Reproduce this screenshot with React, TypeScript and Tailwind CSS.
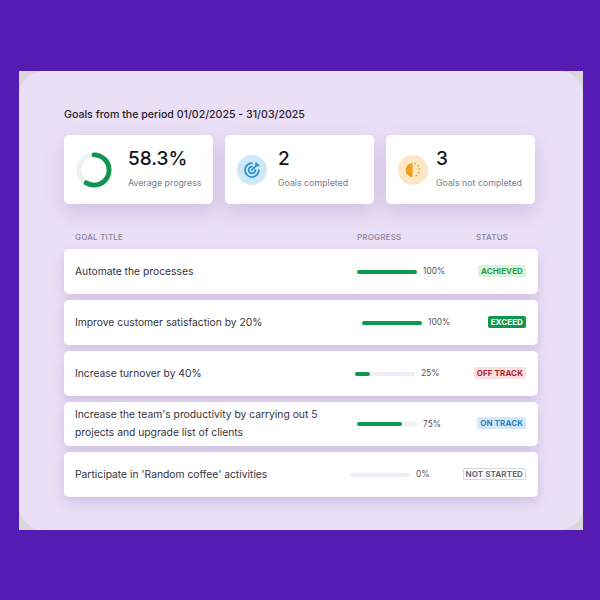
import React from "react";

function Ring() {
  const r = 15.5;
  const c = 2 * Math.PI * r;
  return (
    <svg width="36" height="36" viewBox="0 0 37 37" className="shrink-0">
      <circle cx="18.5" cy="18.5" r={r} fill="none" stroke="#eef0f4" strokeWidth="5" />
      <circle
        cx="18.5"
        cy="18.5"
        r={r}
        fill="none"
        stroke="#0f9650"
        strokeWidth="5"
        strokeLinecap="round"
        strokeDasharray={`${c * 0.583} ${c}`}
        transform="rotate(-90 18.5 18.5)"
      />
    </svg>
  );
}

function TargetIcon() {
  return (
    <div className="w-[30px] h-[30px] rounded-full bg-[#cfe8f8] flex items-center justify-center shrink-0">
      <svg width="18" height="18" viewBox="0 0 18 18" fill="none" stroke="#2b8fd3" strokeWidth="1.7" strokeLinecap="round">
        <path d="M9 2.2A6.9 6.9 0 1 0 15.8 9" />
        <path d="M9 5.6A3.4 3.4 0 1 0 12.4 9" />
        <path d="M8.8 9.2 14.6 3.4" />
        <path d="M13.2 2.2v2.2h2.4" />
      </svg>
    </div>
  );
}

function HalfIcon() {
  return (
    <div className="w-[30px] h-[30px] rounded-full bg-[#fbe6c6] flex items-center justify-center shrink-0">
      <svg width="18" height="18" viewBox="0 0 18 18" fill="none">
        <path d="M8.6 2A7 7 0 0 0 8.6 16Z" fill="#ee9f1c" />
        <path d="M10.6 2.4A7 7 0 0 1 10.6 15.6" stroke="#ee9f1c" strokeWidth="1.2" strokeDasharray="1 2.6" strokeLinecap="round" />
      </svg>
    </div>
  );
}

function StatCard({
  icon,
  value,
  label,
  gap,
}: {
  icon: React.ReactNode;
  value: string;
  label: string;
  gap: string;
}) {
  return (
    <div className={`w-[149px] h-[69px] bg-white rounded-[5px] shadow-[0_8px_20px_rgba(100,70,150,0.2)] flex items-center pl-3 ${gap}`}>
      {icon}
      <div className="flex flex-col pb-[2px]">
        <span className="text-[19px] leading-[22px] font-medium text-[#17151c]">{value}</span>
        <span className="text-[8.8px] leading-[12px] mt-[7px] text-[#7d7d88]">{label}</span>
      </div>
    </div>
  );
}

const rows = [
  { title: "Automate the processes", tw: "w-[282px]", h: "h-[45px]", pct: 100, st: "ACHIEVED", cls: "px-[3px] bg-[#d9f3dc] text-[#2f9e55]" },
  { title: "Improve customer satisfaction by 20%", tw: "w-[287px]", h: "h-[45px]", pct: 100, st: "EXCEED", cls: "px-[3px] bg-[#0f9650] text-white" },
  { title: "Increase turnover by 40%", tw: "w-[280px]", h: "h-[45px]", pct: 25, st: "OFF TRACK", cls: "px-[3px] bg-[#fbe0e2] text-[#b3202c]" },
  { title: "Increase the team's productivity by carrying out 5 projects and upgrade list of clients", tw: "w-[282px]", h: "h-[44px]", pct: 75, st: "ON TRACK", cls: "px-[3px] bg-[#d3e9fa] text-[#2f7fb8]" },
  { title: "Participate in 'Random coffee' activities", tw: "w-[275px]", h: "h-[45px]", pct: 0, st: "NOT STARTED", cls: "px-[2px] bg-white text-[#6b6b76] border border-[#d5d5dc]" },
];

export default function App() {
  return (
    <div
      className="w-[600px] h-[600px] bg-[#561bb2] pt-[71px] pl-[19px] overflow-hidden"
      style={{ fontFamily: "Inter, 'Liberation Sans', sans-serif" }}
    >
      <div className="w-[564px] h-[459px] bg-[#d8d8d8]">
        <div className="w-full h-full rounded-[24px] bg-[#ebdff6] pl-[45px] pt-[37px]">
          <h1 className="text-[10.6px] leading-[14px] font-medium text-[#26222e]">
            Goals from the period 01/02/2025 - 31/03/2025
          </h1>
          <div className="flex gap-[12px] mt-[13px]">
            <StatCard icon={<Ring />} value="58.3%" label="Average progress" gap="gap-[16px]" />
            <StatCard icon={<TargetIcon />} value="2" label="Goals completed" gap="gap-[11px]" />
            <StatCard icon={<HalfIcon />} value="3" label="Goals not completed" gap="gap-[8px]" />
          </div>
          <div className="flex mt-[28px] h-[10px] items-center text-[8px] font-medium tracking-[0.2px] text-[#8c8298]">
            <span className="w-[293px] pl-[11px]">GOAL TITLE</span>
            <span className="w-[119px]">PROGRESS</span>
            <span>STATUS</span>
          </div>
          <div className="flex flex-col gap-[6px] mt-[7px] w-[474px]">
            {rows.map((r) => (
              <div
                key={r.title}
                className={`${r.h} bg-white rounded-[5px] shadow-[0_5px_12px_rgba(100,70,150,0.2)] flex items-center pl-[11px] pr-[12px]`}
              >
                <div className={`${r.tw} shrink-0 pr-[10px] pb-[2px] text-[10.3px] leading-[18px] text-[#35333c]`}>{r.title}</div>
                <div className="w-[60px] h-[4px] rounded-full bg-[#f1edf8] shrink-0">
                  <div className="h-full rounded-full bg-[#0f9650]" style={{ width: `${r.pct}%` }} />
                </div>
                <span className="ml-[6px] text-[8.4px] text-[#55535c]">{r.pct}%</span>
                <span className={`ml-auto mb-[2px] h-[12px] rounded-[2px] flex items-center text-[8px] font-bold tracking-[0.1px] ${r.cls}`}>
                  {r.st}
                </span>
              </div>
            ))}
          </div>
        </div>
      </div>
    </div>
  );
}
